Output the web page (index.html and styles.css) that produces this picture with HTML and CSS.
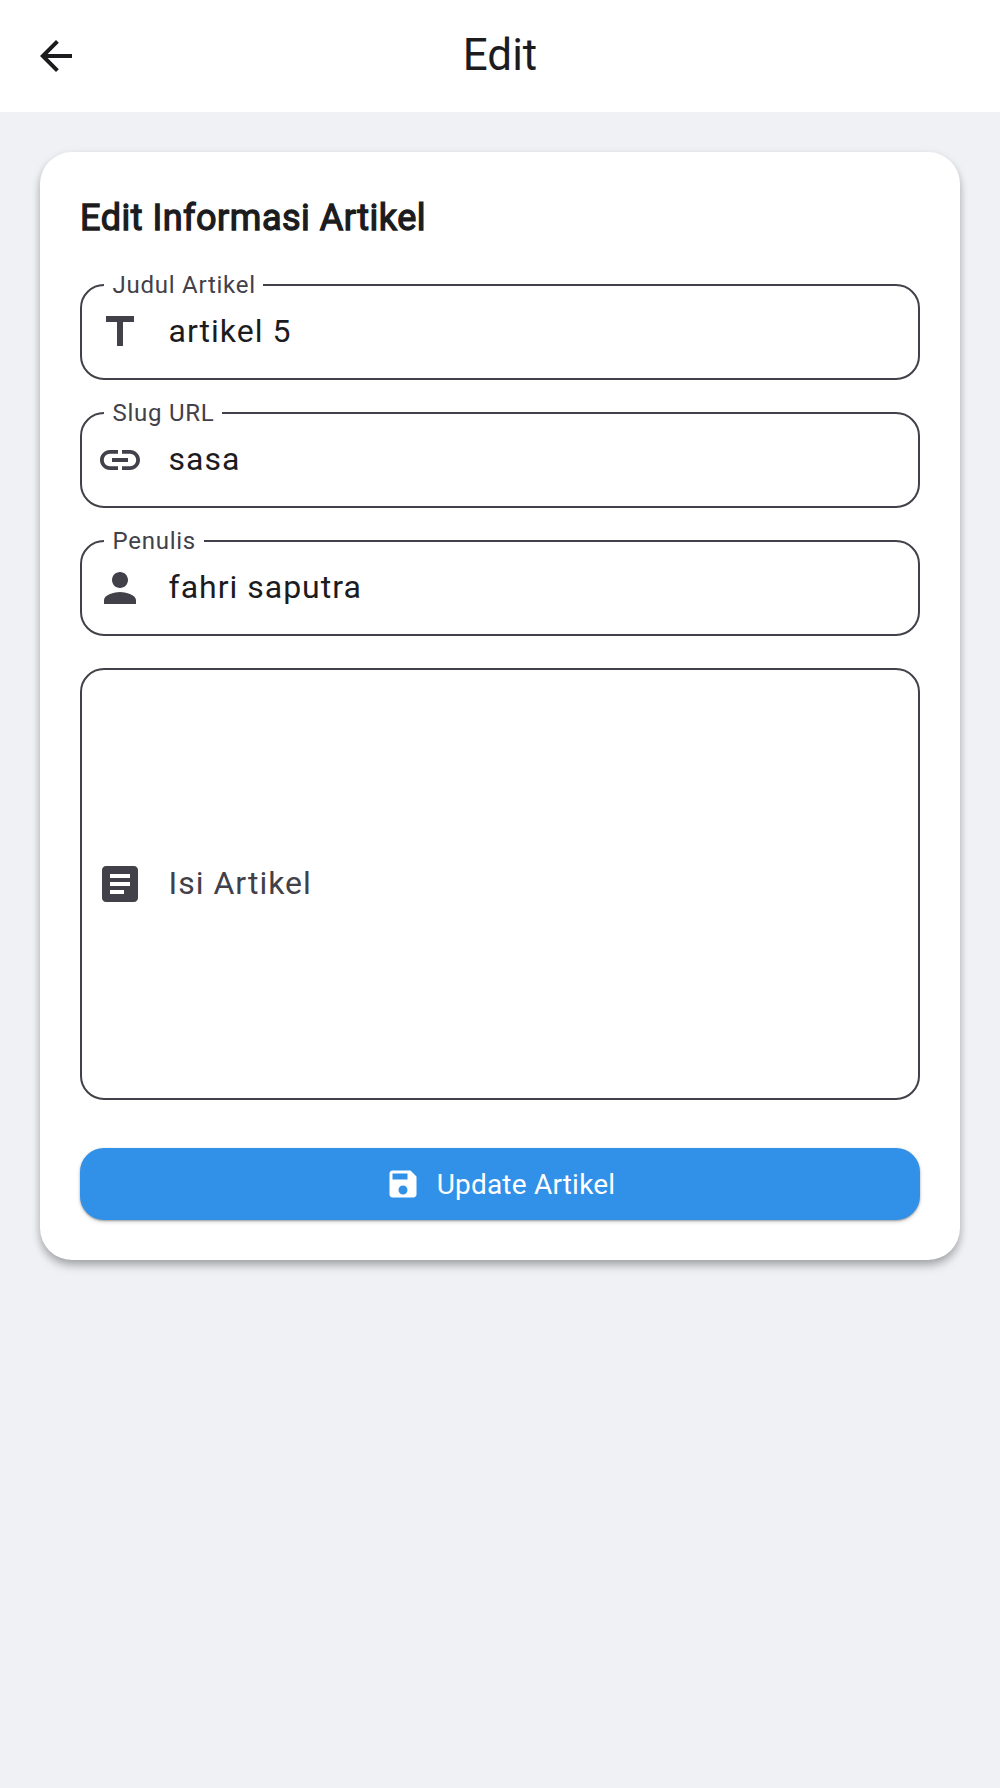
FILE: index.html
```html
<!DOCTYPE html>
<html lang="id">
<head>
<meta charset="utf-8">
<title>Edit</title>
<link rel="stylesheet" href="styles.css">
</head>
<body>
<header class="appbar">
  <svg class="icon back" viewBox="0 0 24 24"><path d="M20 11H7.83l5.590-5.590L12 4l-8 8 8 8 1.410-1.410L7.830 13H20v-2z"/></svg>
  <h1 class="title">Edit</h1>
</header>
<main class="card">
  <h2 class="heading">Edit Informasi Artikel</h2>
  <div class="field">
    <span class="label">Judul Artikel</span>
    <svg class="icon" viewBox="0 0 24 24"><path d="M5 4v3h5.500v12h3V7H19V4z"/></svg>
    <span class="value">artikel 5</span>
  </div>
  <div class="field">
    <span class="label">Slug URL</span>
    <svg class="icon" viewBox="0 0 24 24"><path d="M3.9 12c0-1.710 1.390-3.100 3.100-3.100h4V7H7c-2.760 0-5 2.240-5 5s2.240 5 5 5h4v-1.900H7c-1.710 0-3.100-1.390-3.100-3.100zM8 13h8v-2H8v2zm9-6h-4v1.900h4c1.710 0 3.100 1.390 3.100 3.100s-1.390 3.100-3.100 3.100h-4V17h4c2.760 0 5-2.240 5-5s-2.240-5-5-5z"/></svg>
    <span class="value">sasa</span>
  </div>
  <div class="field">
    <span class="label">Penulis</span>
    <svg class="icon" viewBox="0 0 24 24"><path d="M12 12c2.210 0 4-1.790 4-4s-1.790-4-4-4-4 1.790-4 4 1.790 4 4 4zm0 2c-2.670 0-8 1.340-8 4v2h16v-2c0-2.660-5.330-4-8-4z"/></svg>
    <span class="value">fahri saputra</span>
  </div>
  <div class="field area">
    <svg class="icon" viewBox="0 0 24 24"><path d="M19 3H5c-1.100 0-2 .9-2 2v14c0 1.100.9 2 2 2h14c1.100 0 2-.9 2-2V5c0-1.100-.9-2-2-2zm-5 14H7v-2h7v2zm3-4H7v-2h10v2zm0-4H7V7h10v2z"/></svg>
    <span class="value hint">Isi Artikel</span>
  </div>
  <button class="submit">
    <svg class="save" viewBox="0 0 24 24"><path d="M17 3H5c-1.110 0-2 .9-2 2v14c0 1.100.89 2 2 2h14c1.100 0 2-.9 2-2V7l-4-4zm-5 16c-1.660 0-3-1.340-3-3s1.340-3 3-3 3 1.340 3 3-1.340 3-3 3zm3-10H5V5h10v4z"/></svg>
    <span class="submit-text">Update Artikel</span>
  </button>
</main>
</body>
</html>
```
FILE: styles.css
```css
* { box-sizing: border-box; }
body {
  margin: 0;
  min-height: 1788px;
  background: #eff1f5;
  color: #1c1b1e;
  font-family: Roboto, sans-serif;
}
.appbar {
  display: grid;
  grid-template-columns: 48px 1fr 48px;
  align-items: center;
  height: 112px;
  padding: 0 32px;
  background: #fff;
}
.title {
  margin: 0;
  padding-bottom: 2px;
  text-align: center;
  font-size: 44px;
  line-height: 56px;
  font-weight: 400;
}
.icon { width: 48px; height: 48px; flex: none; fill: currentColor; }
.card {
  display: flex;
  flex-direction: column;
  gap: 32px;
  margin: 40px;
  padding: 40px;
  height: 1108px;
  border-radius: 32px;
  background: #fff;
  box-shadow: 0 4px 8px -2px rgba(0,0,0,.2), 0 7px 10px rgba(0,0,0,.16), 0 2px 12px rgba(0,0,0,.06);
}
.heading {
  margin: 0 0 8px;
  font-size: 36px;
  line-height: 52px;
  font-weight: 400;
  letter-spacing: .5px;
  -webkit-text-stroke: 1.3px currentColor;
}
.field {
  position: relative;
  display: flex;
  align-items: center;
  gap: 24px;
  height: 96px;
  padding: 0 14px;
  border: 2px solid #424048;
  border-radius: 24px;
  color: #424048;
}
.label {
  position: absolute;
  top: -17px;
  left: 22px;
  padding: 0 7.5px 0 8.5px;
  background: #fff;
  font-size: 24px;
  line-height: 32px;
  letter-spacing: .75px;
}
.value {
  padding: 0 0 2px .5px;
  color: #1c1b1e;
  font-size: 32px;
  line-height: 48px;
  letter-spacing: 1px;
}
.hint { color: #424048; }
.area { height: 432px; }
.submit {
  display: flex;
  align-items: center;
  justify-content: center;
  gap: 16px;
  height: 72px;
  margin-top: 16px;
  border: 0;
  border-radius: 24px;
  background: #3190e8;
  color: #fff;
  font: 400 28px/40px Roboto, sans-serif;
  letter-spacing: .2px;
  box-shadow: 0 1px 2px rgba(0,0,0,.3), 0 2px 4px rgba(0,0,0,.14);
}
.submit-text { padding-top: 2px; }
.save { width: 36px; height: 36px; fill: currentColor; }
```
